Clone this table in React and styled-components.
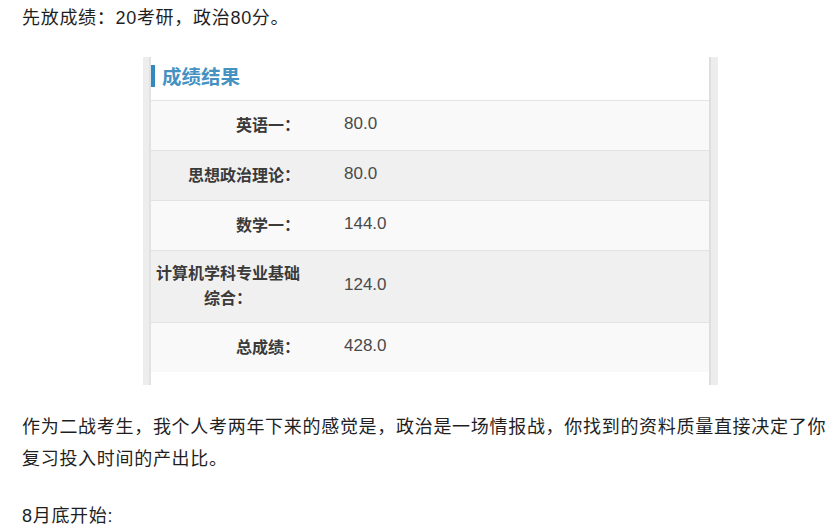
import React from "react";
import styled, { createGlobalStyle } from "styled-components";

const GlobalStyle = createGlobalStyle`
  html, body { margin: 0; padding: 0; background: #ffffff; }
  body { font-family: "Liberation Sans", "Noto Sans CJK SC", sans-serif; }
`;

const Page = styled.div`
  padding: 2px 9px 0 22px;
`;

const Para = styled.p`
  margin: 0 0 ${(p) => p.$gap || 0}px 0;
  font-size: 18px;
  line-height: 32px;
  letter-spacing: 0.7px;
  color: #1f1f1f;
`;

const Figure = styled.div`
  margin: 23px 0 26px 121px;
  width: 575px;
  height: 328px;
  display: flex;
  background: #ffffff;
`;

const SideStrip = styled.div`
  box-sizing: border-box;
  width: ${(p) => p.$w}px;
  background: #ededed;
  ${(p) => (p.$side === "left" ? "border-right: 2px solid #e2e2e2;" : "border-left: 2px solid #dedede;")}
`;

const Sheet = styled.div`
  flex: 1;
  display: flex;
  flex-direction: column;
  background: #ffffff;
  font-family: "Noto Sans CJK SC", "Liberation Sans", sans-serif;
`;

const TitleBar = styled.div`
  box-sizing: border-box;
  height: 43px;
  padding-bottom: 5px;
  display: flex;
  align-items: center;
  gap: 7px;
  flex-shrink: 0;
`;

const Marker = styled.span`
  width: 4px;
  height: 22px;
  background: #3189c0;
`;

const TitleText = styled.span`
  font-size: 19.5px;
  font-weight: 700;
  color: #4592c2;
  line-height: 1;
`;

const Row = styled.div`
  box-sizing: border-box;
  height: ${(p) => p.$h}px;
  padding-bottom: 3px;
  flex-shrink: 0;
  display: flex;
  align-items: center;
  border-top: 1px solid #e3e3e3;
  background: ${(p) => (p.$alt ? "#f0f0f0" : "#f9f9f9")};
`;

const Label = styled.div`
  box-sizing: border-box;
  width: 151px;
  padding-right: 2px;
  text-align: right;
  font-size: 16px;
  font-weight: 700;
  line-height: 25px;
  color: #3a3a3a;
`;

const LabelWrap = styled.span`
  display: inline-block;
  text-align: center;
`;

const Value = styled.div`
  padding-left: 42px;
  font-family: "Liberation Sans", sans-serif;
  font-size: 17px;
  color: #4a4a4a;
`;

const rows = [
  { label: "英语一：", value: "80.0", h: 50 },
  { label: "思想政治理论：", value: "80.0", h: 50 },
  { label: "数学一：", value: "144.0", h: 50 },
  { label: ["计算机学科专业基础", "综合："], value: "124.0", h: 72 },
  { label: "总成绩：", value: "428.0", h: 50 },
];

export default function App() {
  return (
    <Page>
      <GlobalStyle />
      <Para>先放成绩：20考研，政治80分。</Para>
      <Figure>
        <SideStrip $w={8} $side="left" />
        <Sheet>
          <TitleBar>
            <Marker />
            <TitleText>成绩结果</TitleText>
          </TitleBar>
          {rows.map((r, i) => (
            <Row key={i} $h={r.h} $alt={i % 2 === 1}>
              <Label>
                {Array.isArray(r.label) ? (
                  <LabelWrap>
                    {r.label[0]}
                    <br />
                    {r.label[1]}
                  </LabelWrap>
                ) : (
                  r.label
                )}
              </Label>
              <Value>{r.value}</Value>
            </Row>
          ))}
        </Sheet>
        <SideStrip $w={9} $side="right" />
      </Figure>
      <Para $gap={25}>
        作为二战考生，我个人考两年下来的感觉是，政治是一场情报战，你找到的资料质量直接决定了你复习投入时间的产出比。
      </Para>
      <Para>8月底开始:</Para>
    </Page>
  );
}
